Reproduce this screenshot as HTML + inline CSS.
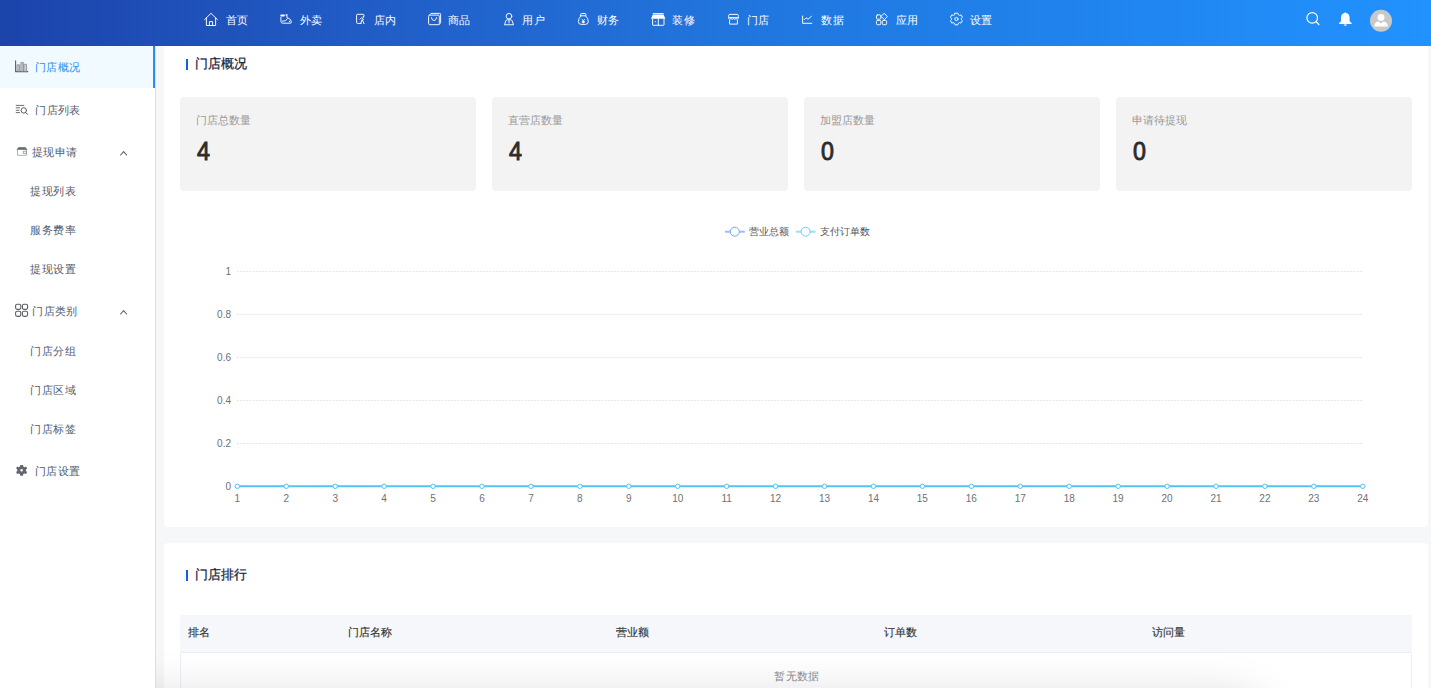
<!DOCTYPE html>
<html><head><meta charset="utf-8">
<style>
*{box-sizing:border-box;margin:0;padding:0}
html,body{width:1431px;height:688px;overflow:hidden}
body{font-family:"Liberation Sans",sans-serif;background:#f5f7f9;position:relative;color:#333}
.ov{position:absolute;left:0;top:0;overflow:visible}
.hdr{position:absolute;left:0;top:0;width:1431px;height:46px;background:linear-gradient(90deg,#1c44ab 0%,#215bc5 24.5%,#2174dc 49%,#2082ec 73%,#2192fe 100%)}
.nt{position:absolute;top:12px;font-size:11px;letter-spacing:0.4px;line-height:16px;color:#fff;white-space:nowrap}
.side{position:absolute;left:0;top:46px;width:156px;height:642px;background:#fff;border-right:1px solid #dcdee2;z-index:3}
.si{position:absolute;font-size:11px;letter-spacing:0.4px;line-height:18px;color:#515a6e;white-space:nowrap}
.si.act{color:#2d8cf0}
.card{position:absolute;left:164px;width:1264px;background:#fff;border-radius:4px}
.ttl{position:absolute;left:31px;font-size:13px;color:#17233d;line-height:18px;-webkit-text-stroke:0.25px #17233d}
.bar{position:absolute;left:22px;width:2px;height:11px;background:#1160e0}
.stat{position:absolute;top:51px;width:296px;height:94px;background:#f3f3f3;border-radius:4px}
.stat .l{position:absolute;left:16px;top:15px;font-size:11px;line-height:16px;color:#999}
.stat .n{position:absolute;left:17px;top:39px;font-size:25px;line-height:30px;color:#2b2b2b;-webkit-text-stroke:0.9px #2b2b2b;transform:scaleX(0.93);transform-origin:0 0}
.tbl{position:absolute;left:16px;top:72px;width:1232px;height:200px}
.tbody{position:absolute;left:0;top:37px;width:1232px;height:200px;border:1px solid #ebeef5}
.th{position:absolute;left:0;top:0;width:1232px;height:37px;background:#f5f7fa}
.th span{position:absolute;top:9px;font-size:11px;line-height:16px;color:#333;-webkit-text-stroke:0.15px #333}
.tip{position:absolute;left:1px;width:1232px;top:52px;text-align:center;font-size:11px;letter-spacing:0.4px;line-height:18px;color:#8a8d96}
.shadow{position:absolute;left:100px;top:700px;width:1160px;height:60px;border-radius:30px;box-shadow:0 0 44px 8px rgba(0,0,0,.13);z-index:2}
</style></head><body>
<div class="hdr"></div>
<span class="nt" style="left:225.6px">首页</span><span class="nt" style="left:299.6px">外卖</span><span class="nt" style="left:373.8px">店内</span><span class="nt" style="left:447.8px">商品</span><span class="nt" style="left:522.4px">用户</span><span class="nt" style="left:596.8px">财务</span><span class="nt" style="left:672.4px">装修</span><span class="nt" style="left:746.8px">门店</span><span class="nt" style="left:821.2px">数据</span><span class="nt" style="left:895.5px">应用</span><span class="nt" style="left:969.8px">设置</span>
<svg class="ov" width="1431" height="46" viewBox="0 0 1431 46" fill="none" stroke="#fff" stroke-width="0.95" stroke-linejoin="round" stroke-linecap="round">
<path d="M204.6 19.6 L211 13.3 L217.4 19.6 M206.4 18 V25.5 H215.6 V18 M209.4 25.5 V21.6 H212.6 V25.5"/>
<rect x="280.4" y="14.6" width="4.4" height="1.9" rx="0.7" fill="#fff" stroke="none"/>
<path d="M280.9 17.3 V21.3 Q280.9 23.2 282.7 23.2 H290.2 Q291.4 23.2 291.4 22.1 Q291.4 19.2 287.8 17.8 M282.4 21.3 Q286.4 21.4 287.4 18.6 L286.6 15.2 M285.8 14.9 H287.3"/>
<circle cx="289.5" cy="21.5" r="0.65" fill="#fff" stroke="none"/>
<path d="M361.2 23.4 H357.5 Q356.6 23.4 356.6 22.5 V15.2 Q356.6 14.3 357.5 14.3 H363.1 Q364 14.3 364 15.2 V16"/>
<path d="M360 19.2 L361.6 17.6 L363.6 19.4 M360.6 23.6 L362.2 19.6 L364 23.6" stroke-width="1"/>
<circle cx="363.4" cy="16.9" r="0.8" fill="#fff" stroke="none"/>
<path d="M428.6 16.2 Q428.6 15.1 429.7 15.1 H438.2 Q439.3 15.1 439.3 16.2 V23.6 Q439.3 24.7 438.2 24.7 H429.7 Q428.6 24.7 428.6 23.6 Z M429.4 15.1 L431 13.4 H439.8 Q440.6 13.4 440.6 14.2 V22.8 L439.3 24.4 M431.4 17.6 Q431.8 20.4 434 20.6 Q436.2 20.4 436.6 17.6"/>
<circle cx="509" cy="16.2" r="2.8"/>
<path d="M504.6 24.4 L505.9 20.8 Q506.3 19.8 507.4 19.8 H510.6 Q511.7 19.8 512.1 20.8 L513.4 24.4 Z M509 20.2 V23"/>
<path d="M580.6 14.4 Q580.6 13.5 581.5 13.5 H585 Q585.9 13.5 585.9 14.4 V15.8 H580.6 Z M581 15.9 Q578.3 18.4 578.4 21.5 Q578.5 24.4 581.2 24.4 H585.4 Q588.2 24.4 588.3 21.5 Q588.4 18.4 585.6 15.9"/>
<path d="M582 19.4 L583.3 20.6 L584.6 19.4 M583.3 20.6 V23 M582.2 21.3 H584.4 M582.2 22.4 H584.4" stroke-width="0.9"/>
<path d="M653.2 13.6 H663.3"/>
<path d="M652.8 14.6 H663.6 L665.4 18.8 H651 Z" fill="#fff" stroke="none"/>
<path d="M652.6 19 V24.8 Q652.6 25.3 653.1 25.3 H663.5 Q664 25.3 664 24.8 V19 M658.3 19 V25.3"/>
<circle cx="655.2" cy="21.6" r="0.55" fill="#fff" stroke="none"/>
<rect x="728.6" y="14.4" width="9.8" height="3.2" rx="1.2"/>
<path d="M728.6 17.6 V18.3 Q728.6 19.2 729.8 19.2 Q731 19.2 731 18.3 Q731 19.2 732.2 19.2 Q733.5 19.2 733.5 18.3 Q733.5 19.2 734.8 19.2 Q736 19.2 736 18.3 Q736 19.2 737.2 19.2 Q738.4 19.2 738.4 18.3 V17.6"/>
<path d="M729.6 20.4 V24.1 H737.4 V20.4"/>
<path d="M802.6 16 V23.3 H811.8 M804.2 19.6 L806 17.8 L808 19.2 L811.4 16.4"/>
<rect x="876.5" y="14.9" width="4.3" height="4.3" rx="1"/>
<rect x="876.5" y="20.4" width="4.3" height="4.3" rx="1"/>
<rect x="882.3" y="20.4" width="4.3" height="4.3" rx="1"/>
<path d="M884.4 13.5 L887.4 16.6 L884.4 19.6 L881.4 16.6 Z"/>
<path id="gear" d="M955 13.2 H957.8 L958.3 14.7 L959.6 15.4 L961 14.9 L962.4 17.3 L961.3 18.3 V19.7 L962.4 20.7 L961 23.1 L959.6 22.6 L958.3 23.3 L957.8 24.8 H955 L954.5 23.3 L953.2 22.6 L951.8 23.1 L950.4 20.7 L951.5 19.7 V18.3 L950.4 17.3 L951.8 14.9 L953.2 15.4 L954.5 14.7 Z"/>
<circle cx="956.4" cy="19" r="1.6"/>
<circle cx="1312.2" cy="17.9" r="5.3" stroke-width="1.2"/>
<path d="M1316.1 21.8 L1318.9 24.5" stroke-width="1.2"/>
<path d="M1345.3 12.2 Q1346 12.2 1346 13 Q1349.6 13.8 1349.6 17.8 V21.3 L1351.6 23 V23.9 H1339.1 V23 L1341 21.3 V17.8 Q1341 13.8 1344.6 13 Q1344.6 12.2 1345.3 12.2 Z M1343.6 24.5 H1347.1 Q1346.8 25.8 1345.3 25.8 Q1343.9 25.8 1343.6 24.5 Z" fill="#fff" stroke="none"/>
<circle cx="1381" cy="20.8" r="11" fill="#c8c8c8" stroke="none"/>
<circle cx="1381" cy="17.4" r="3.4" fill="#fff" stroke="none"/>
<path d="M1374.2 26.4 Q1374.6 21.8 1378.6 21.6 L1381 23.6 L1383.4 21.6 Q1387.4 21.8 1387.8 26.4 Z" fill="#fff" stroke="none"/>
</svg>

<div class="card" style="top:46px;height:481px">
  <div class="bar" style="top:13px"></div>
  <div class="ttl" style="top:9px">门店概况</div>
  <div class="stat" style="left:16px"><div class="l">门店总数量</div><div class="n">4</div></div>
  <div class="stat" style="left:328px"><div class="l">直营店数量</div><div class="n">4</div></div>
  <div class="stat" style="left:640px"><div class="l">加盟店数量</div><div class="n">0</div></div>
  <div class="stat" style="left:952px"><div class="l">申请待提现</div><div class="n">0</div></div>
  <span style="position:absolute;left:585px;top:179px;font-size:9.6px;line-height:14px;color:#555;white-space:nowrap">营业总额</span>
  <span style="position:absolute;left:656px;top:179px;font-size:9.6px;line-height:14px;color:#555;white-space:nowrap">支付订单数</span>
</div>
<svg class="ov" width="1431" height="688" viewBox="0 0 1431 688" fill="none">
<path d="M237 271.5 H1363" stroke="#e6e6e6" stroke-dasharray="2 1.2"/><path d="M237 314.5 H1363" stroke="#e6e6e6" stroke-dasharray="2 1.2"/><path d="M237 357.5 H1363" stroke="#e6e6e6" stroke-dasharray="2 1.2"/><path d="M237 400.5 H1363" stroke="#e6e6e6" stroke-dasharray="2 1.2"/><path d="M237 443.5 H1363" stroke="#e6e6e6" stroke-dasharray="2 1.2"/>
<path d="M237.3 486.3 H1362.8" stroke="#52c3f3" stroke-width="2"/>
<circle cx="237.30" cy="486.3" r="2.2" fill="#fff" stroke="#52c3f3" stroke-width="1"/><circle cx="286.23" cy="486.3" r="2.2" fill="#fff" stroke="#52c3f3" stroke-width="1"/><circle cx="335.17" cy="486.3" r="2.2" fill="#fff" stroke="#52c3f3" stroke-width="1"/><circle cx="384.10" cy="486.3" r="2.2" fill="#fff" stroke="#52c3f3" stroke-width="1"/><circle cx="433.04" cy="486.3" r="2.2" fill="#fff" stroke="#52c3f3" stroke-width="1"/><circle cx="481.97" cy="486.3" r="2.2" fill="#fff" stroke="#52c3f3" stroke-width="1"/><circle cx="530.91" cy="486.3" r="2.2" fill="#fff" stroke="#52c3f3" stroke-width="1"/><circle cx="579.84" cy="486.3" r="2.2" fill="#fff" stroke="#52c3f3" stroke-width="1"/><circle cx="628.78" cy="486.3" r="2.2" fill="#fff" stroke="#52c3f3" stroke-width="1"/><circle cx="677.71" cy="486.3" r="2.2" fill="#fff" stroke="#52c3f3" stroke-width="1"/><circle cx="726.65" cy="486.3" r="2.2" fill="#fff" stroke="#52c3f3" stroke-width="1"/><circle cx="775.58" cy="486.3" r="2.2" fill="#fff" stroke="#52c3f3" stroke-width="1"/><circle cx="824.52" cy="486.3" r="2.2" fill="#fff" stroke="#52c3f3" stroke-width="1"/><circle cx="873.45" cy="486.3" r="2.2" fill="#fff" stroke="#52c3f3" stroke-width="1"/><circle cx="922.39" cy="486.3" r="2.2" fill="#fff" stroke="#52c3f3" stroke-width="1"/><circle cx="971.32" cy="486.3" r="2.2" fill="#fff" stroke="#52c3f3" stroke-width="1"/><circle cx="1020.26" cy="486.3" r="2.2" fill="#fff" stroke="#52c3f3" stroke-width="1"/><circle cx="1069.19" cy="486.3" r="2.2" fill="#fff" stroke="#52c3f3" stroke-width="1"/><circle cx="1118.13" cy="486.3" r="2.2" fill="#fff" stroke="#52c3f3" stroke-width="1"/><circle cx="1167.06" cy="486.3" r="2.2" fill="#fff" stroke="#52c3f3" stroke-width="1"/><circle cx="1216.00" cy="486.3" r="2.2" fill="#fff" stroke="#52c3f3" stroke-width="1"/><circle cx="1264.93" cy="486.3" r="2.2" fill="#fff" stroke="#52c3f3" stroke-width="1"/><circle cx="1313.87" cy="486.3" r="2.2" fill="#fff" stroke="#52c3f3" stroke-width="1"/><circle cx="1362.80" cy="486.3" r="2.2" fill="#fff" stroke="#52c3f3" stroke-width="1"/>
<g fill="#6e7079" font-size="10" font-family="Liberation Sans, sans-serif"><text x="231" y="274.9" text-anchor="end">1</text><text x="231" y="317.9" text-anchor="end">0.8</text><text x="231" y="360.9" text-anchor="end">0.6</text><text x="231" y="403.9" text-anchor="end">0.4</text><text x="231" y="446.9" text-anchor="end">0.2</text><text x="231" y="489.59999999999997" text-anchor="end">0</text><text x="237.30" y="501.5" text-anchor="middle">1</text><text x="286.23" y="501.5" text-anchor="middle">2</text><text x="335.17" y="501.5" text-anchor="middle">3</text><text x="384.10" y="501.5" text-anchor="middle">4</text><text x="433.04" y="501.5" text-anchor="middle">5</text><text x="481.97" y="501.5" text-anchor="middle">6</text><text x="530.91" y="501.5" text-anchor="middle">7</text><text x="579.84" y="501.5" text-anchor="middle">8</text><text x="628.78" y="501.5" text-anchor="middle">9</text><text x="677.71" y="501.5" text-anchor="middle">10</text><text x="726.65" y="501.5" text-anchor="middle">11</text><text x="775.58" y="501.5" text-anchor="middle">12</text><text x="824.52" y="501.5" text-anchor="middle">13</text><text x="873.45" y="501.5" text-anchor="middle">14</text><text x="922.39" y="501.5" text-anchor="middle">15</text><text x="971.32" y="501.5" text-anchor="middle">16</text><text x="1020.26" y="501.5" text-anchor="middle">17</text><text x="1069.19" y="501.5" text-anchor="middle">18</text><text x="1118.13" y="501.5" text-anchor="middle">19</text><text x="1167.06" y="501.5" text-anchor="middle">20</text><text x="1216.00" y="501.5" text-anchor="middle">21</text><text x="1264.93" y="501.5" text-anchor="middle">22</text><text x="1313.87" y="501.5" text-anchor="middle">23</text><text x="1362.80" y="501.5" text-anchor="middle">24</text></g>
<path d="M725 231.7 H744.8" stroke="#9dbcfa" stroke-width="2"/>
<circle cx="734.8" cy="231.7" r="4.5" fill="#fff" stroke="#7aa5f8" stroke-width="1"/>
<path d="M795.8 231.7 H815.6" stroke="#9edcf8" stroke-width="2"/>
<circle cx="805.6" cy="231.7" r="4.5" fill="#fff" stroke="#6fcdf5" stroke-width="1"/>
</svg>

<div class="card" style="top:543px;height:200px">
  <div class="bar" style="top:27px"></div>
  <div class="ttl" style="top:23px">门店排行</div>
  <div class="tbl">
    <div class="tbody"></div><div class="th"><span style="left:8px">排名</span><span style="left:168px">门店名称</span><span style="left:436px">营业额</span><span style="left:704px">订单数</span><span style="left:972px">访问量</span></div>
    <div class="tip">暂无数据</div>
  </div>
</div>
<div class="shadow"></div>

<div class="side">
  <div style="position:absolute;left:0;top:0;width:155px;height:42px;background:#f0faff"></div>
  <div style="position:absolute;left:153px;top:0;width:2px;height:42px;background:#2d8cf0"></div>
  <span class="si act" style="left:34.8px;top:12.0px">门店概况</span><span class="si " style="left:35.3px;top:55.0px">门店列表</span><span class="si " style="left:31.8px;top:97.0px">提现申请</span><span class="si sub" style="left:30.4px;top:136.0px">提现列表</span><span class="si sub" style="left:30.4px;top:175.0px">服务费率</span><span class="si sub" style="left:30.4px;top:214.0px">提现设置</span><span class="si " style="left:32.3px;top:256.0px">门店类别</span><span class="si sub" style="left:30.4px;top:296.0px">门店分组</span><span class="si sub" style="left:30.4px;top:335.0px">门店区域</span><span class="si sub" style="left:30.4px;top:374.0px">门店标签</span><span class="si " style="left:35.1px;top:416.0px">门店设置</span>
  <svg class="ov" width="156" height="642" viewBox="0 46 156 642" fill="none" stroke="#5a5e66" stroke-width="1" stroke-linejoin="round" stroke-linecap="round">
<path d="M15.6 60.8 V71.6 H27.8" stroke-width="1.1"/>
<rect x="17.4" y="64.8" width="2.2" height="6.6" fill="#b8bcc2" stroke="#80848a" stroke-width="0.7"/>
<rect x="21.2" y="62.4" width="2.2" height="9" fill="#b8bcc2" stroke="#80848a" stroke-width="0.7"/>
<rect x="24.4" y="64.3" width="2.2" height="7.1" fill="#c8ccd2" stroke="#80848a" stroke-width="0.7"/>
<path d="M16.2 105.4 H23.8 M16.2 107.8 H19.6 M16.2 110.3 H19 M16.2 112.6 H19.6" stroke-width="0.9"/>
<circle cx="23.8" cy="110.4" r="2.7" stroke-width="1"/>
<path d="M25.8 112.6 L27.6 114.4"/>
<path d="M17.5 149.4 V155.3 H26.5 V149.4" stroke="#a8acb2" stroke-width="0.9"/><path d="M17.3 149.2 L18.6 147.6 H25.4 L26.7 149.2 Z" fill="#6a6e75" stroke="#6a6e75" stroke-width="0.8"/><path d="M23.6 151.2 H26.5 V153.4 H23.6 Z" stroke="#8a8e95" stroke-width="0.8"/>
<path d="M120.6 155 L123.6 151.6 L126.6 155" stroke-width="1.1"/>
<rect x="15.6" y="304.2" width="5.2" height="5.2" rx="1.6" stroke-width="1.1"/>
<rect x="22.4" y="304.2" width="5.2" height="5.2" rx="1.6" stroke-width="1.1"/>
<rect x="15.6" y="311.2" width="5.2" height="5.2" rx="1.6" stroke-width="1.1"/>
<rect x="22.4" y="311.2" width="5.2" height="5.2" rx="1.6" stroke-width="1.1"/>
<path d="M120.6 314 L123.6 310.6 L126.6 314" stroke-width="1.1"/>
<path fill="#62666d" stroke="none" fill-rule="evenodd" d="M20.3 464.9 H22.9 L23.3 466.5 L24.6 467.2 L26.1 466.6 L27.1 468.5 L25.9 469.6 V471 L27.1 472.1 L26.1 474 L24.6 473.4 L23.3 474.1 L22.9 475.7 H20.3 L19.9 474.1 L18.6 473.4 L17.1 474 L16.1 472.1 L17.3 471 V469.6 L16.1 468.5 L17.1 466.6 L18.6 467.2 L19.9 466.5 Z M21.6 469 A1.3 1.3 0 1 0 21.6 471.6 A1.3 1.3 0 1 0 21.6 469 Z"/>
</svg>
</div>
</body></html>
